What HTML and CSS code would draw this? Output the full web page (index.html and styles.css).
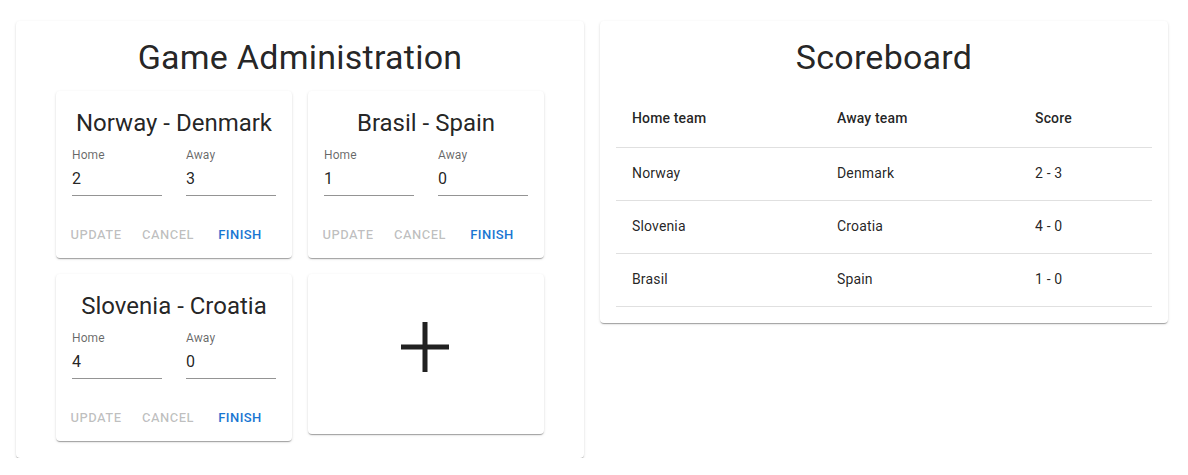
FILE: index.html
```html
<!DOCTYPE html>
<html lang="en">
<head>
<meta charset="utf-8">
<title>Game Administration</title>
<link rel="stylesheet" href="styles.css">
</head>
<body>
<div class="page">
  <section class="paper admin">
    <h1 class="title">Game Administration</h1>
    <div class="cards">
      <div class="card">
        <h2 class="card-title">Norway - Denmark</h2>
        <div class="fields">
          <div class="field"><span class="label">Home</span><div class="input">2</div></div>
          <div class="field"><span class="label">Away</span><div class="input">3</div></div>
        </div>
        <div class="actions">
          <button class="btn disabled">Update</button>
          <button class="btn disabled">Cancel</button>
          <button class="btn primary">Finish</button>
        </div>
      </div>
      <div class="card">
        <h2 class="card-title">Brasil - Spain</h2>
        <div class="fields">
          <div class="field"><span class="label">Home</span><div class="input">1</div></div>
          <div class="field"><span class="label">Away</span><div class="input">0</div></div>
        </div>
        <div class="actions">
          <button class="btn disabled">Update</button>
          <button class="btn disabled">Cancel</button>
          <button class="btn primary">Finish</button>
        </div>
      </div>
      <div class="card">
        <h2 class="card-title">Slovenia - Croatia</h2>
        <div class="fields">
          <div class="field"><span class="label">Home</span><div class="input">4</div></div>
          <div class="field"><span class="label">Away</span><div class="input">0</div></div>
        </div>
        <div class="actions">
          <button class="btn disabled">Update</button>
          <button class="btn disabled">Cancel</button>
          <button class="btn primary">Finish</button>
        </div>
      </div>
      <div class="card add-card">
        <svg class="plus" width="48" height="50" viewBox="0 0 48 50" aria-hidden="true">
          <rect x="0" y="22.5" width="48" height="5" fill="#212121"/>
          <rect x="21.5" y="0" width="5" height="50" fill="#212121"/>
        </svg>
      </div>
    </div>
  </section>
  <section class="paper scoreboard">
    <h1 class="title">Scoreboard</h1>
    <table class="table">
      <colgroup><col class="c1"><col class="c2"><col class="c3"></colgroup>
      <thead>
        <tr><th>Home team</th><th>Away team</th><th>Score</th></tr>
      </thead>
      <tbody>
        <tr><td>Norway</td><td>Denmark</td><td>2 - 3</td></tr>
        <tr><td>Slovenia</td><td>Croatia</td><td>4 - 0</td></tr>
        <tr><td>Brasil</td><td>Spain</td><td>1 - 0</td></tr>
      </tbody>
    </table>
  </section>
</div>
</body>
</html>
```
FILE: styles.css
```css
* { box-sizing: border-box; }
html, body { margin: 0; padding: 0; background: #fff; }
body {
  font-family: Roboto, "Liberation Sans", Arial, sans-serif;
  color: rgba(0,0,0,0.87);
}
.page {
  display: flex;
  align-items: flex-start;
  gap: 16px;
  padding: 21px 0 0 16px;
}
.paper {
  width: 568px;
  background: #fff;
  border-radius: 4px;
  box-shadow: 0px 2px 1px -1px rgba(0,0,0,0.2), 0px 1px 1px 0px rgba(0,0,0,0.14), 0px 1px 3px 0px rgba(0,0,0,0.12);
}
.admin { padding: 15px 40px 17px; }
.scoreboard { padding: 15px 16px 16px; }
.title {
  margin: 0 0 13px;
  font-size: 34px;
  font-weight: 400;
  line-height: 42px;
  letter-spacing: 0.25px;
  text-align: center;
}
.cards {
  display: grid;
  grid-template-columns: 236px 236px;
  gap: 16px;
  align-items: start;
}
.card {
  background: #fff;
  border-radius: 4px;
  box-shadow: 0px 2px 1px -1px rgba(0,0,0,0.2), 0px 1px 1px 0px rgba(0,0,0,0.14), 0px 1px 3px 0px rgba(0,0,0,0.12);
  padding: 16px 16px 0;
}
.card-title {
  margin: 0;
  font-size: 24px;
  font-weight: 400;
  line-height: 32px;
  text-align: center;
}
.fields {
  display: flex;
  justify-content: space-between;
  margin-top: 8px;
}
.field { width: 90px; display: flex; flex-direction: column; }
.label {
  font-size: 12px;
  line-height: 16px;
  color: rgba(0,0,0,0.6);
  letter-spacing: 0.1px;
}
.input {
  height: 33px;
  padding: 4px 0 6px;
  font-size: 16px;
  line-height: 23px;
  border-bottom: 1px solid rgba(0,0,0,0.42);
}
.actions {
  display: flex;
  gap: 8px;
  margin: 16px -16px 0;
  padding: 8px 8px 7px;
}
.btn {
  min-width: 64px;
  height: 31px;
  padding: 4px 5px;
  border: 0;
  background: transparent;
  font-family: inherit;
  font-size: 13px;
  font-weight: 500;
  line-height: 22.75px;
  letter-spacing: 0.46px;
  text-transform: uppercase;
  border-radius: 4px;
}
.btn.disabled { color: rgba(0,0,0,0.26); }
.btn.primary { color: #1976d2; }
.add-card {
  height: 160px;
  padding: 48px 0 0;
  display: flex;
  justify-content: center;
  align-items: flex-start;
}
.plus { display: block; margin-left: -2px; }
.table {
  width: 100%;
  border-collapse: collapse;
  table-layout: fixed;
}
.c1 { width: 205px; }
.c2 { width: 198px; }
.table th, .table td {
  text-align: left;
  padding: 15px 16px 17px;
  font-size: 14px;
  border-bottom: 1px solid rgb(224,224,224);
  letter-spacing: 0.15px;
}
.table th { font-weight: 500; line-height: 24px; }
.table td { font-weight: 400; line-height: 20px; }
```
